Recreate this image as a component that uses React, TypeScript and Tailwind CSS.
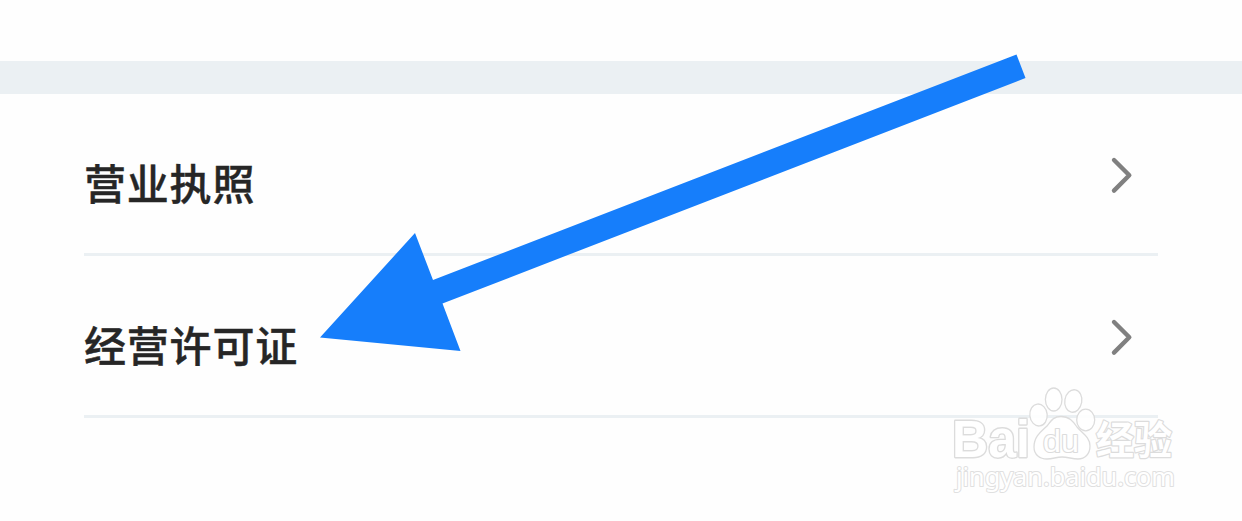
const rows = ['营业执照', '经营许可证'];

function Chevron() {
  return (
    <svg className="mr-[25px] mt-[62px] h-[38px] w-[24px]" viewBox="0 0 24 38" fill="none">
      <path d="M5 4 20.300 19.300 5 34.600" stroke="#808080" strokeWidth="4.4" strokeLinecap="round" strokeLinejoin="round" />
    </svg>
  );
}

function Arrow() {
  return (
    <svg className="pointer-events-none absolute left-0 top-0 h-[521px] w-[1242px]" viewBox="0 0 1242 521">
      <path d="M320 337.500 415 233 433 280 1016.500 54.500 1025.500 78 442.500 303.500 460.500 351Z" fill="#167efb" />
    </svg>
  );
}

function Watermark() {
  return (
    <svg
      className="pointer-events-none absolute left-[930px] top-[370px] h-[140px] w-[270px]"
      viewBox="0 0 270 140"
      fill="#fff"
      stroke="#dcdcdc"
      strokeWidth="1.3"
      strokeLinejoin="round"
    >
      <text x="22" y="87" fontSize="51" fontWeight="700" fontFamily="'Liberation Sans', sans-serif" strokeWidth="2.8" paintOrder="stroke" textLength="78" lengthAdjust="spacingAndGlyphs">Bai</text>
      <text x="166" y="83.500" fontSize="39" fontWeight="700" fontFamily="'Noto Sans CJK SC', sans-serif" strokeWidth="2.4" paintOrder="stroke" textLength="76" lengthAdjust="spacingAndGlyphs">经验</text>
      <g fillOpacity="0.9">
        <ellipse cx="108.500" cy="45" rx="8.700" ry="11" transform="rotate(-6 108.500 45)" />
        <ellipse cx="123.700" cy="29.500" rx="8.300" ry="11.500" />
        <ellipse cx="143.300" cy="31" rx="8.500" ry="11.300" transform="rotate(10 143.300 31)" />
        <ellipse cx="155.700" cy="50" rx="9" ry="10.800" />
        <path d="M131 46.500C123 46.500 121 51 117 56C112 61 104 66 104 77C104 85 110 89 117 89C123 89 126 87 132 87C138 87 142 89 148 89C155 89 160 84 160 76C160 67 152 63 147 57C143 51 139 46.500 131 46.500Z" />
      </g>
      <text x="113" y="81.500" fontSize="31" fontFamily="'Liberation Sans', sans-serif" strokeWidth="2.2" paintOrder="stroke" textLength="36" lengthAdjust="spacingAndGlyphs">du</text>
      <text x="26" y="116" fontSize="25" fontFamily="'Noto Sans', sans-serif" stroke="#e0e0e0" strokeWidth="2" paintOrder="stroke" textLength="219" lengthAdjust="spacingAndGlyphs">jingyan.baidu.com</text>
    </svg>
  );
}

export default function App() {
  return (
    <main className="relative h-[521px] w-[1242px] overflow-hidden bg-[#fefefe]">
      <div className="h-[61px]" />
      <div className="h-[33px] bg-[#ebf0f3]" />
      <div className="ml-[84px] w-[1074px]">
        {rows.map((label) => (
          <div key={label} className="flex h-[162px] items-start justify-between border-b-3 border-[#ebf0f3]">
            <span className="mt-[58px] font-['Noto_Sans_CJK_SC',sans-serif] text-[42px] font-medium leading-[60px] tracking-[0.8px] text-[#262626] [-webkit-text-stroke:0.4px_#262626]">
              {label}
            </span>
            <Chevron />
          </div>
        ))}
      </div>
      <Arrow />
      <Watermark />
    </main>
  );
}
